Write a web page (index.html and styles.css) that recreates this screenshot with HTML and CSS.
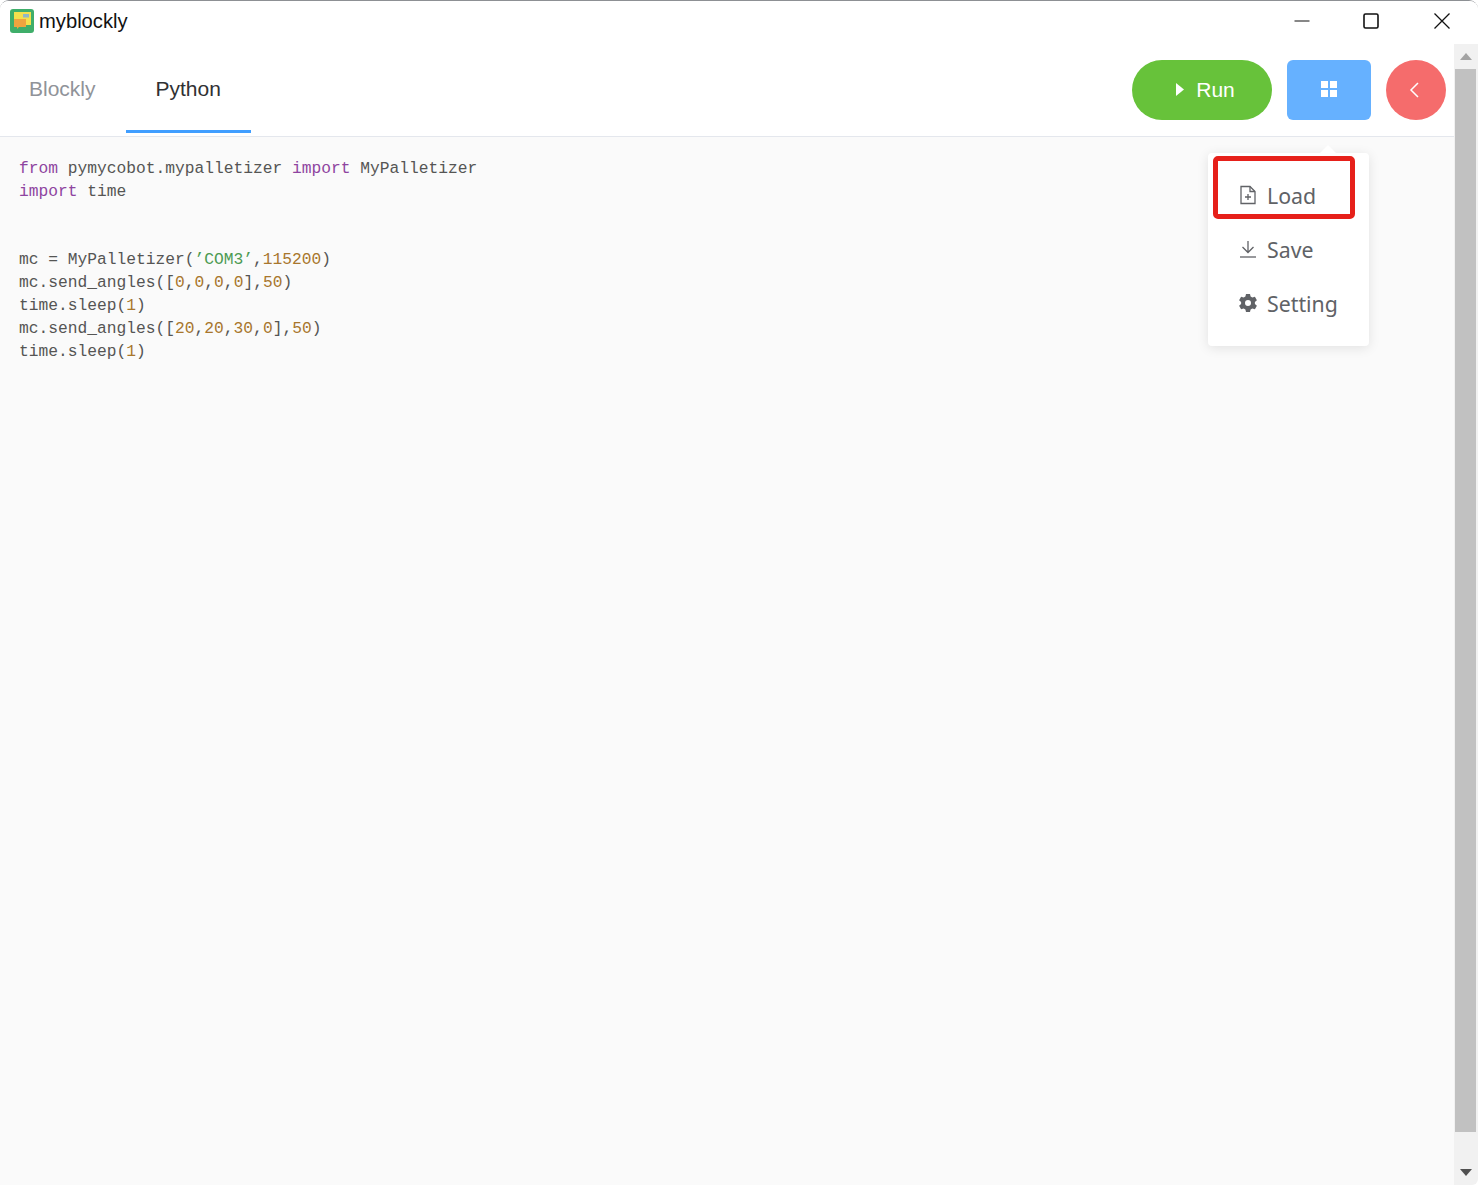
FILE: index.html
```html
<!DOCTYPE html>
<html lang="en">
<head>
<meta charset="utf-8">
<title>myblockly</title>
<link rel="stylesheet" href="styles.css">
</head>
<body>
<div class="window">
  <header class="titlebar">
    <div class="app">
      <svg class="logo" width="24" height="24" viewBox="0 0 24 24"><rect width="24" height="24" rx="3" fill="#3fae6a"/><path d="M4 3h17v13h-5V10H4z" fill="#f4e04d"/><path d="M4 10h12v8H9l-2 2v-2H4z" fill="#eea43f"/><rect x="13" y="5" width="6" height="3.5" fill="#8fb8c8"/></svg>
      <span class="app-name">myblockly</span>
    </div>
    <div class="win-controls">
      <svg class="win-btn" width="16" height="16" viewBox="0 0 16 16"><path d="M2.500 8h15" stroke="#111" stroke-width="1.2" fill="none"/></svg>
      <svg class="win-btn" width="16" height="16" viewBox="0 0 16 16"><rect x="1" y="1" width="14" height="14" rx="1.5" stroke="#111" stroke-width="1.6" fill="none"/></svg>
      <svg class="win-btn" width="16" height="16" viewBox="0 0 16 16"><path d="M0.5 0.5l15 15M15.5 0.5l-15 15" stroke="#111" stroke-width="1.3" fill="none"/></svg>
    </div>
  </header>
  <div class="main">
    <div class="content">
      <div class="toolbar">
        <nav class="tabs">
          <span class="tab">Blockly</span>
          <span class="tab tab-active">Python</span>
        </nav>
        <div class="actions">
          <button class="btn btn-run"><svg width="8" height="13" viewBox="0 0 8 13"><path d="M0 0l8 6.500-8 6.500z" fill="#fff"/></svg><span>Run</span></button>
          <button class="btn btn-menu"><svg width="18" height="18" viewBox="0 0 18 18"><g fill="#fff"><rect x="1" y="0" width="7" height="7"/><rect x="10" y="0" width="7" height="7"/><rect x="1" y="9" width="7" height="7"/><rect x="10" y="9" width="7" height="7"/></g></svg></button>
          <button class="btn btn-back"><svg width="12" height="16" viewBox="0 0 12 16"><path d="M10 1L3 8l7 7" stroke="#fff" stroke-width="1.500" fill="none"/></svg></button>
        </div>
      </div>
      <pre class="code"><span class="kw">from</span> pymycobot.mypalletizer <span class="kw">import</span> MyPalletizer
<span class="kw">import</span> time


mc = MyPalletizer(<span class="str">’COM3’</span>,<span class="num">115200</span>)
mc.send_angles([<span class="num">0</span>,<span class="num">0</span>,<span class="num">0</span>,<span class="num">0</span>],<span class="num">50</span>)
time.sleep(<span class="num">1</span>)
mc.send_angles([<span class="num">20</span>,<span class="num">20</span>,<span class="num">30</span>,<span class="num">0</span>],<span class="num">50</span>)
time.sleep(<span class="num">1</span>)</pre>
    </div>
    <div class="scrollbar">
      <div class="sb-arrow"><svg width="12" height="7" viewBox="0 0 12 7"><path d="M6 0l6 7H0z" fill="#a3a3a3"/></svg></div>
      <div class="sb-thumb"></div>
      <div class="sb-arrow"><svg width="12" height="7" viewBox="0 0 12 7"><path d="M0 0h12L6 7z" fill="#505050"/></svg></div>
    </div>
  </div>
  <div class="menu">
    <span class="menu-arrow"></span>
    <div class="menu-item">
      <svg width="18" height="20" viewBox="0 0 18 20"><g stroke="#606266" stroke-width="1.300" fill="none"><path d="M2 1.500h9l5 5v12H2z"/><path d="M11 1.500v5h5"/><path d="M9 9v6M6 12h6"/></g></svg>
      <span>Load</span>
    </div>
    <div class="menu-item">
      <svg width="18" height="20" viewBox="0 0 18 20"><g stroke="#606266" stroke-width="1.300" fill="none"><path d="M9 2v11M3.500 8l5.500 5.500L14.500 8"/><path d="M1 18h16"/></g></svg>
      <span>Save</span>
    </div>
    <div class="menu-item">
      <svg width="18" height="20" viewBox="0 0 18 20"><path fill="#606266" fill-rule="evenodd" d="M7 1h4l.6 2.600 1.700 1 2.600-.8 2 3.400-2 1.800v2l2 1.800-2 3.400-2.600-.8-1.700 1-.6 2.600H7l-.6-2.600-1.700-1-2.600.8-2-3.400 2-1.800v-2l-2-1.800 2-3.400 2.600.8 1.700-1zM9 7a3 3 0 1 0 0 6 3 3 0 0 0 0-6z"/></svg>
      <span>Setting</span>
    </div>
  </div>
  <div class="highlight"></div>
</div>
</body>
</html>
```

FILE: styles.css
```css
* { box-sizing: border-box; }
html, body { margin: 0; padding: 0; background: #fff; }
.window {
  position: relative;
  width: 1478px;
  height: 1185px;
  display: flex;
  flex-direction: column;
  overflow: hidden;
  background: #fff;
  border-top: 1px solid #8d9094;
  border-radius: 9px 9px 6px 0;
}
.titlebar {
  height: 43px;
  flex: none;
  display: flex;
  justify-content: space-between;
  align-items: center;
  padding: 0 28px 3px 10px;
  background: #fff;
}
.app { display: flex; align-items: center; gap: 5px; }
.logo { display: block; }
.app-name { font: 20.200px "Liberation Sans", Arial, sans-serif; color: #111; }
.win-controls { display: flex; gap: 55px; align-items: center; }
.win-btn { display: block; overflow: visible; }
.main { flex: 1; display: flex; min-height: 0; }
.content { flex: 1; min-width: 0; background: #fafafa; display: flex; flex-direction: column; }
.toolbar {
  height: 93px;
  flex: none;
  background: #fff;
  border-bottom: 1px solid #e4e7ed;
  display: flex;
  justify-content: space-between;
  padding-right: 8px;
}
.tabs { display: flex; }
.tab {
  height: 89px;
  padding: 4px 30px 0;
  display: flex;
  align-items: center;
  font: 21px "Liberation Sans", Arial, sans-serif;
  color: #909399;
  border-bottom: 3px solid transparent;
}
.tabs .tab:first-child { padding-left: 29px; }
.tab-active { color: #303133; border-bottom-color: #409eff; }
.actions { display: flex; gap: 15px; padding-top: 16px; }
.btn { height: 60px; border: 0; padding: 0; display: flex; align-items: center; justify-content: center; color: #fff; }
.btn-run { width: 140px; border-radius: 30px; background: #67c23a; gap: 12px; padding: 0 0 1px 7px; font: 21px "Liberation Sans", Arial, sans-serif; }
.btn-menu { width: 84px; border-radius: 6px; background: #66b1ff; }
.btn-back { width: 60px; border-radius: 50%; background: #f56c6c; padding-right: 4px; }
.code {
  margin: 0;
  padding: 21px 19px;
  font: 16.250px/22.850px "Liberation Mono", "Courier New", monospace;
  color: #555554;
}
.kw { color: #8e44a0; }
.str { color: #4c9a52; }
.num { color: #a8762c; }
.scrollbar { width: 24px; flex: none; display: flex; flex-direction: column; background: #f1f1f1; }
.sb-arrow { height: 25px; flex: none; display: flex; align-items: center; justify-content: center; }
.sb-thumb { flex: 1; background: #c1c1c1; margin: 0 2px 28px 1px; }
.menu {
  position: absolute;
  left: 1208px;
  top: 152px;
  width: 161px;
  height: 193px;
  padding: 15px 0 0;
  background: #fff;
  border-radius: 4px;
  box-shadow: 0 2px 12px rgba(0,0,0,.1);
}
.menu-arrow {
  position: absolute;
  left: 112px;
  top: -8px;
  border: 8px solid transparent;
  border-top: 0;
  border-bottom-color: #fff;
}
.menu-item {
  height: 54px;
  padding-left: 31px;
  display: flex;
  align-items: center;
  gap: 10px;
  font: 21.300px "Noto Sans", sans-serif;
  color: #606266;
}
.highlight {
  position: absolute;
  left: 1213px;
  top: 155px;
  width: 142px;
  height: 63px;
  border: 5px solid #e6201a;
  border-radius: 5px;
}
```
